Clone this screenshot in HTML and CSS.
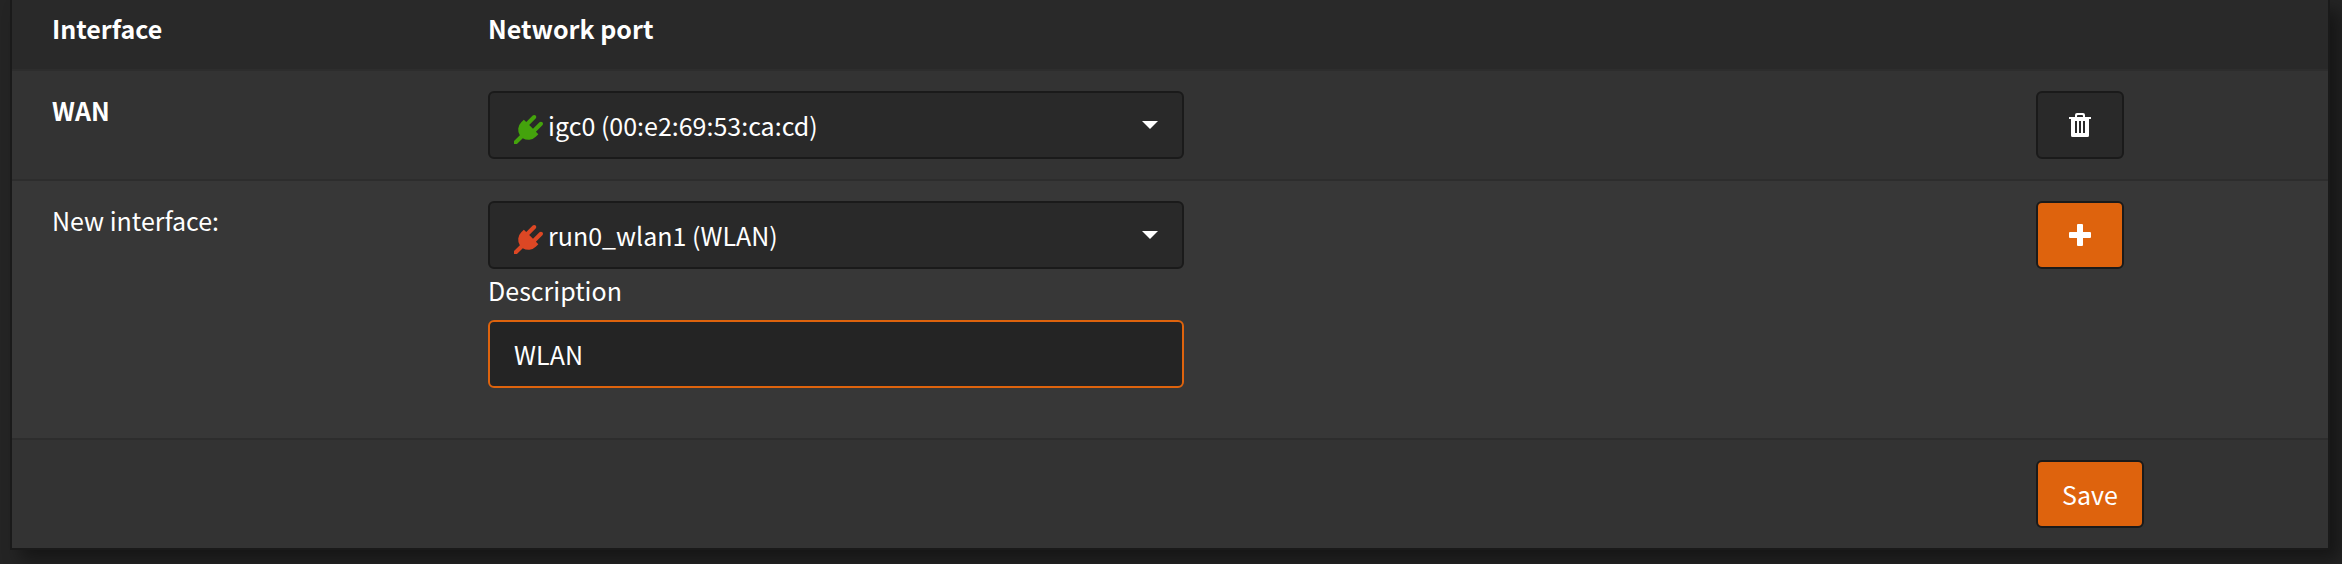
FILE: index.html
```html
<!DOCTYPE html>
<html lang="en">
<head>
<meta charset="utf-8">
<title>Interfaces: Assignments</title>
<link rel="stylesheet" href="styles.css">
</head>
<body>
<svg class="sprite" aria-hidden="true">
  <symbol id="plug" viewBox="0 0 1792 1792"><path d="M1755 453q37 38 37 90.500t-37 90.500l-401 400 150 150-160 160q-163 163-389.500 186.500t-411.500-100.500l-362 362h-181v-181l362-362q-124-185-100.500-411.500t186.500-389.500l160-160 150 150 400-401q38-37 91-37t90 37 37 90.500-37 90.500l-400 401 234 234 401-400q38-37 91-37t90 37z"/></symbol>
</svg>
<form class="panel">
  <table class="assignments">
    <colgroup>
      <col class="col-name">
      <col class="col-port">
      <col class="col-action">
    </colgroup>
    <thead>
      <tr><th scope="col">Interface</th><th scope="col">Network port</th><th></th></tr>
    </thead>
    <tbody>
      <tr>
        <td><label class="name" for="wan-port">WAN</label></td>
        <td>
          <div class="picker">
            <svg class="plug plug-up" aria-hidden="true"><use href="#plug"/></svg>
            <select id="wan-port" class="control"><option>igc0 (00:e2:69:53:ca:cd)</option></select>
          </div>
        </td>
        <td>
          <button type="button" class="btn btn-icon" aria-label="Delete WAN">
            <svg class="icon" viewBox="0 0 24 24" aria-hidden="true"><path fill-rule="evenodd" d="M7 4V2Q7 0 9 0H15Q17 0 17 2V4H23V6H21V22.500Q21 24 19.500 24H4.500Q3 24 3 22.500V6H1V4ZM9 4H15V3Q15 2 14 2H10Q9 2 9 3ZM7 8V20H9V8ZM11 8V20H13V8ZM15 8V20H17V8Z"/></svg>
          </button>
        </td>
      </tr>
      <tr class="alt">
        <td><label for="new-port">New interface:</label></td>
        <td>
          <div class="picker">
            <svg class="plug plug-down" aria-hidden="true"><use href="#plug"/></svg>
            <select id="new-port" class="control"><option>run0_wlan1 (WLAN)</option></select>
          </div>
          <label class="desc-label" for="description">Description</label>
          <input id="description" class="control desc" type="text" value="WLAN">
        </td>
        <td>
          <button type="button" class="btn btn-icon btn-primary" aria-label="Add interface">
            <svg class="icon" viewBox="0 0 24 24" aria-hidden="true"><path d="M10 1H14Q15 1 15 2V9H22Q23 9 23 10V14Q23 15 22 15H15V22Q15 23 14 23H10Q9 23 9 22V15H2Q1 15 1 14V10Q1 9 2 9H9V2Q9 1 10 1Z"/></svg>
          </button>
        </td>
      </tr>
      <tr>
        <td></td>
        <td></td>
        <td><button type="submit" class="btn btn-primary">Save</button></td>
      </tr>
    </tbody>
  </table>
</form>
</body>
</html>
```
FILE: styles.css
```css
* {
  box-sizing: border-box;
}

body {
  margin: 0;
  padding: 0 12px 14px 10px;
  background: #242424;
  color: #fff;
  font-family: "Noto Sans CJK SC", "Noto Sans", sans-serif;
  font-size: 25px;
  line-height: 38px;
}

.sprite {
  position: absolute;
  width: 0;
  height: 0;
}

.panel {
  border: 2px solid #1a1a1a;
  border-top: 0;
  box-shadow: 10px 10px 16px rgba(0, 0, 0, 0.4);
}

.assignments {
  width: 100%;
  table-layout: fixed;
  border-collapse: separate;
  border-spacing: 0;
}

.col-name {
  width: 18.83%;
}

.col-port {
  width: 66.84%;
}

th,
td {
  padding: 20px 40px;
  text-align: left;
  vertical-align: top;
}

th {
  padding-top: 9px;
  padding-bottom: 22px;
  background: #292929;
  font-weight: 700;
}

td {
  border-top: 2px solid #2d2d2d;
  background: #333;
}

.alt td {
  padding-bottom: 50px;
  background: #373737;
}

label {
  display: block;
}

.name {
  font-weight: 700;
}

.picker {
  position: relative;
  max-width: 696px;
}

.picker::after {
  content: "";
  position: absolute;
  top: 30px;
  right: 26px;
  border: 8px solid transparent;
  border-top-color: #fff;
  border-bottom: 0;
  pointer-events: none;
}

.plug {
  position: absolute;
  top: 24px;
  left: 26px;
  width: 29px;
  height: 29px;
  pointer-events: none;
}

.plug-up {
  fill: #44a30c;
}

.plug-down {
  fill: #dc4724;
}

.control {
  display: block;
  width: 100%;
  max-width: 696px;
  height: 68px;
  margin: 0;
  padding: 0 24px;
  border: 2px solid #1a1a1a;
  border-radius: 6px;
  outline: 0;
  appearance: none;
  background: #292929;
  color: inherit;
  font: inherit;
}

.picker .control {
  padding-left: 58px;
}

.desc-label {
  margin: 2px 0 11px;
}

.desc {
  border-color: #de630d;
  background: #242424;
}

.btn {
  display: flex;
  align-items: center;
  justify-content: center;
  height: 68px;
  margin: 0;
  padding: 0 24px;
  border: 2px solid #1a1a1a;
  border-radius: 6px;
  background: #292929;
  color: inherit;
  font: inherit;
}

.btn-icon {
  width: 88px;
}

.btn-primary {
  background: #de630d;
}

.icon {
  width: 24px;
  height: 24px;
  fill: currentColor;
}
```
